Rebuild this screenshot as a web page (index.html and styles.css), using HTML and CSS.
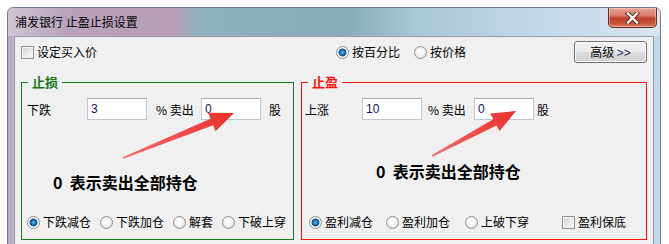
FILE: index.html
```html
<!DOCTYPE html>
<html>
<head>
	<meta charset="utf-8">
	<title>止盈止损设置</title>
	<link rel="stylesheet" href="styles.css">
</head>
<body>
	<div class="page">
		<div class="window">
			<div class="titlebar">
				<span class="title">浦发银行 止盈止损设置</span>
				<span class="close">
					<svg width="17" height="12" viewBox="0 0 17 12">
						<path d="M4 1.5 L13 10.5 M13 1.5 L4 10.5" stroke="#5a2018" stroke-width="4.2" stroke-linecap="square"/>
						<path d="M4 1.5 L13 10.5 M13 1.5 L4 10.5" stroke="#ffffff" stroke-width="2.4" stroke-linecap="square"/>
					</svg>
				</span>
			</div>

			<div class="client">
				<!-- top row: buy price, mode, advanced -->
				<div class="toprow">
					<label class="opt"><input type="checkbox" class="box">设定买入价</label>
					<div class="mode">
						<label class="opt"><input type="radio" name="mode" class="dot" checked>按百分比</label>
						<label class="opt gap14"><input type="radio" name="mode" class="dot">按价格</label>
					</div>
					<button class="adv">高级 <span class="more">&gt;&gt;</span></button>
				</div>

				<div class="groups">
					<fieldset class="group loss">
						<legend>止损</legend>
						<div class="row">
							<span class="lbl">下跌</span>
							<input class="num" type="text" value="3">
							<span class="unit">% 卖出</span>
							<input class="num" type="text" value="0">
							<span class="gu">股</span>
						</div>
						<div class="note">0&nbsp; 表示卖出全部持仓</div>
						<div class="choices">
							<label class="opt"><input type="radio" name="loss" class="dot" checked>下跌减仓</label>
							<label class="opt"><input type="radio" name="loss" class="dot">下跌加仓</label>
							<label class="opt"><input type="radio" name="loss" class="dot">解套</label>
							<label class="opt"><input type="radio" name="loss" class="dot">下破上穿</label>
						</div>
					</fieldset>

					<fieldset class="group gain">
						<legend>止盈</legend>
						<div class="row">
							<span class="lbl">上涨</span>
							<input class="num" type="text" value="10">
							<span class="unit">% 卖出</span>
							<input class="num" type="text" value="0">
							<span class="gu">股</span>
						</div>
						<div class="note">0&nbsp; 表示卖出全部持仓</div>
						<div class="choices">
							<label class="opt"><input type="radio" name="gain" class="dot" checked>盈利减仓</label>
							<label class="opt"><input type="radio" name="gain" class="dot">盈利加仓</label>
							<label class="opt"><input type="radio" name="gain" class="dot">上破下穿</label>
							<label class="opt"><input type="checkbox" class="box">盈利保底</label>
						</div>
					</fieldset>
				</div>
			</div>
		</div>

		<svg class="arrows" width="669" height="244" viewBox="0 0 669 244">
			<defs>
				<linearGradient id="red1" x1="123" y1="158" x2="234" y2="113" gradientUnits="userSpaceOnUse">
					<stop offset="0" stop-color="#f46a6a"/>
					<stop offset="1" stop-color="#e8302c"/>
				</linearGradient>
				<linearGradient id="red2" x1="432" y1="156" x2="516" y2="111" gradientUnits="userSpaceOnUse">
					<stop offset="0" stop-color="#f46a6a"/>
					<stop offset="1" stop-color="#e8302c"/>
				</linearGradient>
			</defs>
			<polygon fill="url(#red1)" points="122.7,157.3 210.5,118.8 208,112.7 234,113 215.6,131.3 213.1,125.2 123.3,158.7"/>
			<polygon fill="url(#red2)" points="431.6,155.3 493.2,119.2 490.2,113.5 516,111 499.6,131.1 496.6,125.4 432.4,156.7"/>
		</svg>
	</div>
</body>
</html>
```

FILE: styles.css
```css
body {
	margin: 0;
	background: #ffffff;
	font-family: "Noto Sans CJK SC", "Liberation Sans", sans-serif;
	font-size: 12px;
	color: #000000;
}

.page {
	position: relative;
	width: 669px;
	height: 244px;
	overflow: hidden;
}

.window {
	box-sizing: border-box;
	width: 654px;
	height: 250px;
	margin: 7px 0 0 7px;
	padding: 0 6px;
	border: 1px solid #6f7f8f;
	border-radius: 6px 6px 0 0;
	background: linear-gradient(90deg, #bba8c0 0%, #c6d9ec 4%, #c6d9ec 100%);
}

.titlebar {
	display: flex;
	justify-content: space-between;
	align-items: flex-start;
	height: 28px;
	margin: 0 -6px;
	padding: 0 3px 0 7px;
	border-radius: 5px 5px 0 0;
	background: linear-gradient(90deg, #cfc6d3 0%, #b9a3bb 9%, #b49fb6 26%, #8fb1ba 29%, #89adb6 52%, #a8c6d4 62%, #c2d7e5 80%, #d9e6ef 100%);
}

.title {
	padding-top: 6px;
	line-height: 16px;
	color: #000000;
}

.close {
	display: flex;
	align-items: center;
	justify-content: center;
	box-sizing: border-box;
	width: 49px;
	height: 20px;
	border: 1px solid #6e2a22;
	border-top: none;
	border-radius: 0 0 5px 5px;
	background: linear-gradient(180deg, #e7a696 0%, #d77b68 40%, #c0402c 55%, #cc5a3e 85%, #e0896a 100%);
	box-shadow: inset 0 0 0 1px rgba(255, 220, 210, 0.45);
}

.client {
	height: 210px;
	border: 1px solid #8f9aa6;
	background: #f0f0f0;
}

/* top row */

.toprow {
	display: flex;
	align-items: center;
	height: 22px;
	padding: 4px 6px 0 6px;
}

.opt {
	display: flex;
	align-items: center;
	line-height: 16px;
	white-space: nowrap;
}

.mode {
	display: flex;
	margin-left: auto;
}

.gap14 {
	margin-left: 14px;
}

.adv {
	box-sizing: border-box;
	width: 73px;
	height: 22px;
	margin-left: 108px;
	padding: 0;
	border: 1px solid #707070;
	border-radius: 3px;
	background: linear-gradient(180deg, #f2f2f2 0%, #ebebeb 49%, #dddddd 50%, #cfcfcf 100%);
	box-shadow: inset 0 0 0 1px #fcfcfc;
	font-family: "Noto Sans CJK SC", sans-serif;
	font-size: 12px;
	line-height: 18px;
	color: #000000;
}

.more {
	color: #1f2f70;
	font-family: "Liberation Sans", sans-serif;
}

/* radio and check boxes */

.dot {
	-webkit-appearance: none;
	appearance: none;
	box-sizing: border-box;
	width: 13px;
	height: 13px;
	margin: 0 3px 0 0;
	border: 1px solid #8e8f8f;
	border-radius: 50%;
	background: radial-gradient(circle at 45% 40%, #ffffff 0%, #f4f4f4 40%, #d4d4d4 100%);
}

.dot:checked {
	background: radial-gradient(circle at 50% 50%, #7cc8f4 0%, #2a86cc 1.5px, #0f5a9e 3px, #2a5a86 3.6px, #ffffff 4.4px, #e6e6e6 100%);
}

.box {
	-webkit-appearance: none;
	appearance: none;
	box-sizing: border-box;
	width: 13px;
	height: 13px;
	margin: 0 3px 0 0;
	border: 1px solid #8f8f8f;
	background: linear-gradient(135deg, #d0d0d0 0%, #ececec 60%, #f8f8f8 100%);
	box-shadow: inset 0 0 0 1px #f4f4f4;
}

/* groups */

.groups {
	display: flex;
	gap: 7px;
	margin-top: 11px;
	padding: 0 6px;
}

.group {
	box-sizing: border-box;
	height: 166px;
	margin: 0;
	padding: 0 0 0 5px;
	min-width: 0;
}

.group legend {
	margin-left: 1px;
	padding: 0 4px 0 4px;
	font-size: 13px;
	font-weight: bold;
	line-height: 16px;
}

.loss {
	width: 273px;
	border: 1px solid #1a7a1a;
}

.loss legend {
	color: #18781a;
}

.gain {
	width: 346px;
	padding-left: 3px;
	border: 1px solid #ff1010;
}

.gain legend {
	margin-left: 3px;
	color: #ff1010;
}

.row {
	display: flex;
	align-items: center;
	height: 22px;
	margin-top: 8px;
}

.lbl {
	width: 60px;
}

.gain .lbl {
	width: 57px;
}

.num {
	box-sizing: border-box;
	width: 60px;
	height: 22px;
	margin: 0;
	padding: 0 3px;
	border: 1px solid #c3c6cc;
	border-top-color: #abadb3;
	background: #ffffff;
	font-family: "Liberation Sans", sans-serif;
	font-size: 12px;
	color: #14145a;
}

.unit {
	width: 45px;
	margin-left: 9px;
}

.gu {
	margin-left: 8px;
}

.gain .unit {
	width: 46px;
	margin-left: 6px;
}

.gain .gu {
	margin-left: 3px;
}

.note {
	margin: 52px 0 0 26px;
	font-size: 16px;
	font-weight: bold;
	line-height: 20px;
}

.gain .note {
	margin: 41px 0 0 71px;
}

.choices {
	display: flex;
	margin-top: 22px;
}

.loss .choices .opt {
	margin-right: 9px;
}

.gain .choices {
	margin-top: 33px;
	margin-left: 4px;
}

.gain .choices .opt:nth-child(1) {
	margin-right: 13px;
}

.gain .choices .opt:nth-child(2) {
	margin-right: 15px;
}

.gain .choices .opt:nth-child(3) {
	margin-right: 33px;
}

.arrows {
	position: absolute;
	top: 0;
	left: 0;
}
```
